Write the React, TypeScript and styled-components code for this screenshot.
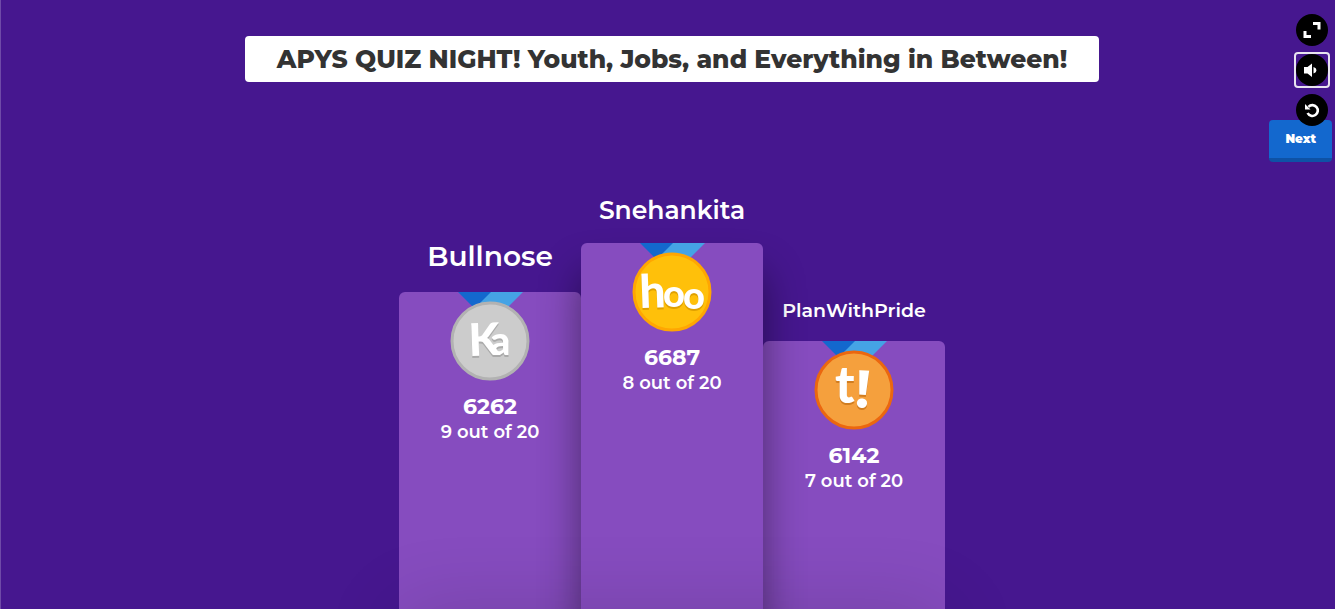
import React from "react";
import styled, { createGlobalStyle, css } from "styled-components";

const GlobalStyle = createGlobalStyle`
  *, *::before, *::after { box-sizing: border-box; }
  body {
    margin: 0;
    background: #46178f;
    color: #fff;
    font-family: Montserrat, Inter, "Liberation Sans", sans-serif;
  }
`;

const Page = styled.main`
  position: relative;
  display: flex;
  flex-direction: column;
  align-items: center;
  height: 100vh;
  padding: 36px 0 0 8px;
  border-left: 1px solid #6f4aa8;
  overflow: hidden;
  background: #46178f;
`;

const Title = styled.h1`
  flex: none;
  margin: 0;
  padding: 4px 32px;
  border-radius: 4px;
  background: #fff;
  color: #333;
  font-size: 25px;
  line-height: 38px;
  font-weight: 800;
  white-space: nowrap;
`;

const Podium = styled.ol`
  position: relative;
  flex: 1;
  display: flex;
  width: 41%;
  min-width: 546px;
  max-width: 546px;
  margin: 96px 0 0;
  padding: 0;
  list-style: none;
`;

const Place = styled.li<{ $drop: number; $front?: boolean }>`
  position: relative;
  z-index: ${(p) => (p.$front ? 1 : 0)};
  flex: 1;
  display: flex;
  flex-direction: column;
  padding-top: ${(p) => p.$drop}px;
`;

const Name = styled.h2<{ $size: number }>`
  display: flex;
  align-items: flex-end;
  justify-content: center;
  height: 65px;
  margin: 0;
  padding-bottom: 18px;
  font-size: ${(p) => p.$size}px;
  line-height: 1.2;
  font-weight: 600;
`;

const Column = styled.div<{ $front?: boolean }>`
  flex: 1;
  display: flex;
  flex-direction: column;
  align-items: center;
  border-radius: 6px 6px 0 0;
  background: #864cbf;
  ${(p) => p.$front && css`box-shadow: 0 30px 40px rgba(0, 0, 0, 0.45);`}
`;

const MedalArt = styled.svg`
  display: block;
  flex: none;
  width: 80px;
  height: 90px;
  font-family: Lato, sans-serif;
  font-weight: 900;
`;

const MedalLetters = styled.g<{ $shade: string }>`
  fill: #fff;
  filter: drop-shadow(0 2px 0 ${(p) => p.$shade});
`;

const Score = styled.strong`
  margin-top: 12px;
  font-size: 22px;
  line-height: 26px;
  font-weight: 700;
`;

const Correct = styled.span`
  font-size: 18px;
  line-height: 24px;
  font-weight: 600;
`;

const Floor = styled.li`
  position: absolute;
  z-index: 2;
  top: 100%;
  left: 0;
  right: 0;
  height: 80px;
  box-shadow: 0 0 80px rgba(0, 0, 0, 0.14);
`;

const Controls = styled.nav`
  position: absolute;
  z-index: 3;
  top: 14px;
  right: 3px;
  display: flex;
  flex-direction: column;
  align-items: flex-end;
`;

const RoundButton = styled.button<{ $focused?: boolean }>`
  position: relative;
  z-index: 1;
  display: grid;
  place-items: center;
  width: 32px;
  height: 32px;
  margin: 0 4px 8px 0;
  padding: 0;
  border: 0;
  border-radius: 50%;
  background: #000;
  color: #fff;
  ${(p) =>
    p.$focused &&
    css`
      &::after {
        content: "";
        position: absolute;
        inset: -2px;
        border: 2px solid #e8e4f0;
        border-radius: 4px;
      }
    `}
  svg { display: block; }
`;

const NextButton = styled.button`
  margin-top: -14px;
  padding: 0 16px;
  height: 42px;
  border: 0;
  border-bottom: 4px solid #0e52a6;
  border-radius: 4px;
  background: #1368ce;
  color: #fff;
  font: 900 12px/36px Montserrat, Inter, sans-serif;
`;

type Letter = { ch: string; x: number; y: number; size: number; turn?: number; family?: string; weight?: number };
type MedalProps = { rim: string; face: string; shade: string; letters: Letter[] };

function Medal({ rim, face, shade, letters }: MedalProps) {
  return (
    <MedalArt viewBox="0 0 80 90" aria-hidden="true">
      <path d="M8 0H42L56 14L40 32Z" fill="#1368ce" />
      <path d="M41 0H73L45 28L27 14Z" fill="#45a3e5" />
      <circle cx="40" cy="49" r="38" fill={face} stroke={rim} strokeWidth="3" />
      <MedalLetters $shade={shade}>
        {letters.map(({ ch, x, y, size, turn = 0, family, weight }, i) => (
          <text
            key={i}
            x={x}
            y={y}
            fontSize={size}
            fontFamily={family}
            fontWeight={weight}
            transform={`rotate(${turn} ${x} ${y})`}
          >
            {ch}
          </text>
        ))}
      </MedalLetters>
    </MedalArt>
  );
}

type Player = { name: string; size: number; drop: number; front: boolean; score: number; right: number; medal: MedalProps };

const players: Player[] = [
  {
    name: "Bullnose", size: 28, drop: 49, front: false, score: 6262, right: 9,
    medal: {
      rim: "#b2b2b2", face: "#ccc", shade: "#aaa",
      letters: [{ ch: "K", x: 19, y: 64, size: 45, turn: -2 }, { ch: "a", x: 40, y: 63, size: 40 }],
    },
  },
  {
    name: "Snehankita", size: 25, drop: 0, front: true, score: 6687, right: 8,
    medal: {
      rim: "#ffa602", face: "#ffc00a", shade: "#dfa000",
      letters: [
        { ch: "h", x: 8, y: 65, size: 46, turn: -2 },
        { ch: "o", x: 31, y: 64, size: 38 },
        { ch: "o", x: 51, y: 66, size: 38 },
      ],
    },
  },
  {
    name: "PlanWithPride", size: 19, drop: 98, front: false, score: 6142, right: 7,
    medal: {
      rim: "#eb670f", face: "#f5a03d", shade: "#d17d20",
      letters: [
        { ch: "t", x: 21, y: 62, size: 52 },
        { ch: "!", x: 40, y: 66, size: 53, turn: 4, family: "Montserrat, Lato, sans-serif", weight: 700 },
      ],
    },
  },
];

export default function App() {
  return (
    <>
      <GlobalStyle />
      <Page>
        <Title>APYS QUIZ NIGHT! Youth, Jobs, and Everything in Between!</Title>
        <Podium>
          {players.map((p) => (
            <Place key={p.name} $drop={p.drop} $front={p.front}>
              <Name $size={p.size}>{p.name}</Name>
              <Column $front={p.front}>
                <Medal {...p.medal} />
                <Score>{p.score}</Score>
                <Correct>{p.right} out of 20</Correct>
              </Column>
            </Place>
          ))}
          <Floor aria-hidden="true" />
        </Podium>
        <Controls aria-label="Game controls">
          <RoundButton aria-label="Full screen">
            <svg width="18" height="18" viewBox="0 0 18 18" fill="none" stroke="#fff" strokeWidth="3">
              <path d="M10 2.5H16V8.5M2 10V15.5H8" />
            </svg>
          </RoundButton>
          <RoundButton aria-label="Volume" $focused>
            <svg width="18" height="18" viewBox="0 0 18 18" fill="#fff">
              <path d="M1 6H4.500L9 2.500V16L4.500 12.500H1ZM10.500 6Q13.500 7 13.500 9.300T10.500 12.500Z" />
            </svg>
          </RoundButton>
          <RoundButton aria-label="Replay">
            <svg width="18" height="18" viewBox="0 0 18 18">
              <path d="M5.500 5.800A5.400 5.400 0 1 1 4.600 12" fill="none" stroke="#fff" strokeWidth="2.600" />
              <path d="M2 3V8.500H7.500Z" fill="#fff" />
            </svg>
          </RoundButton>
          <NextButton>Next</NextButton>
        </Controls>
      </Page>
    </>
  );
}
